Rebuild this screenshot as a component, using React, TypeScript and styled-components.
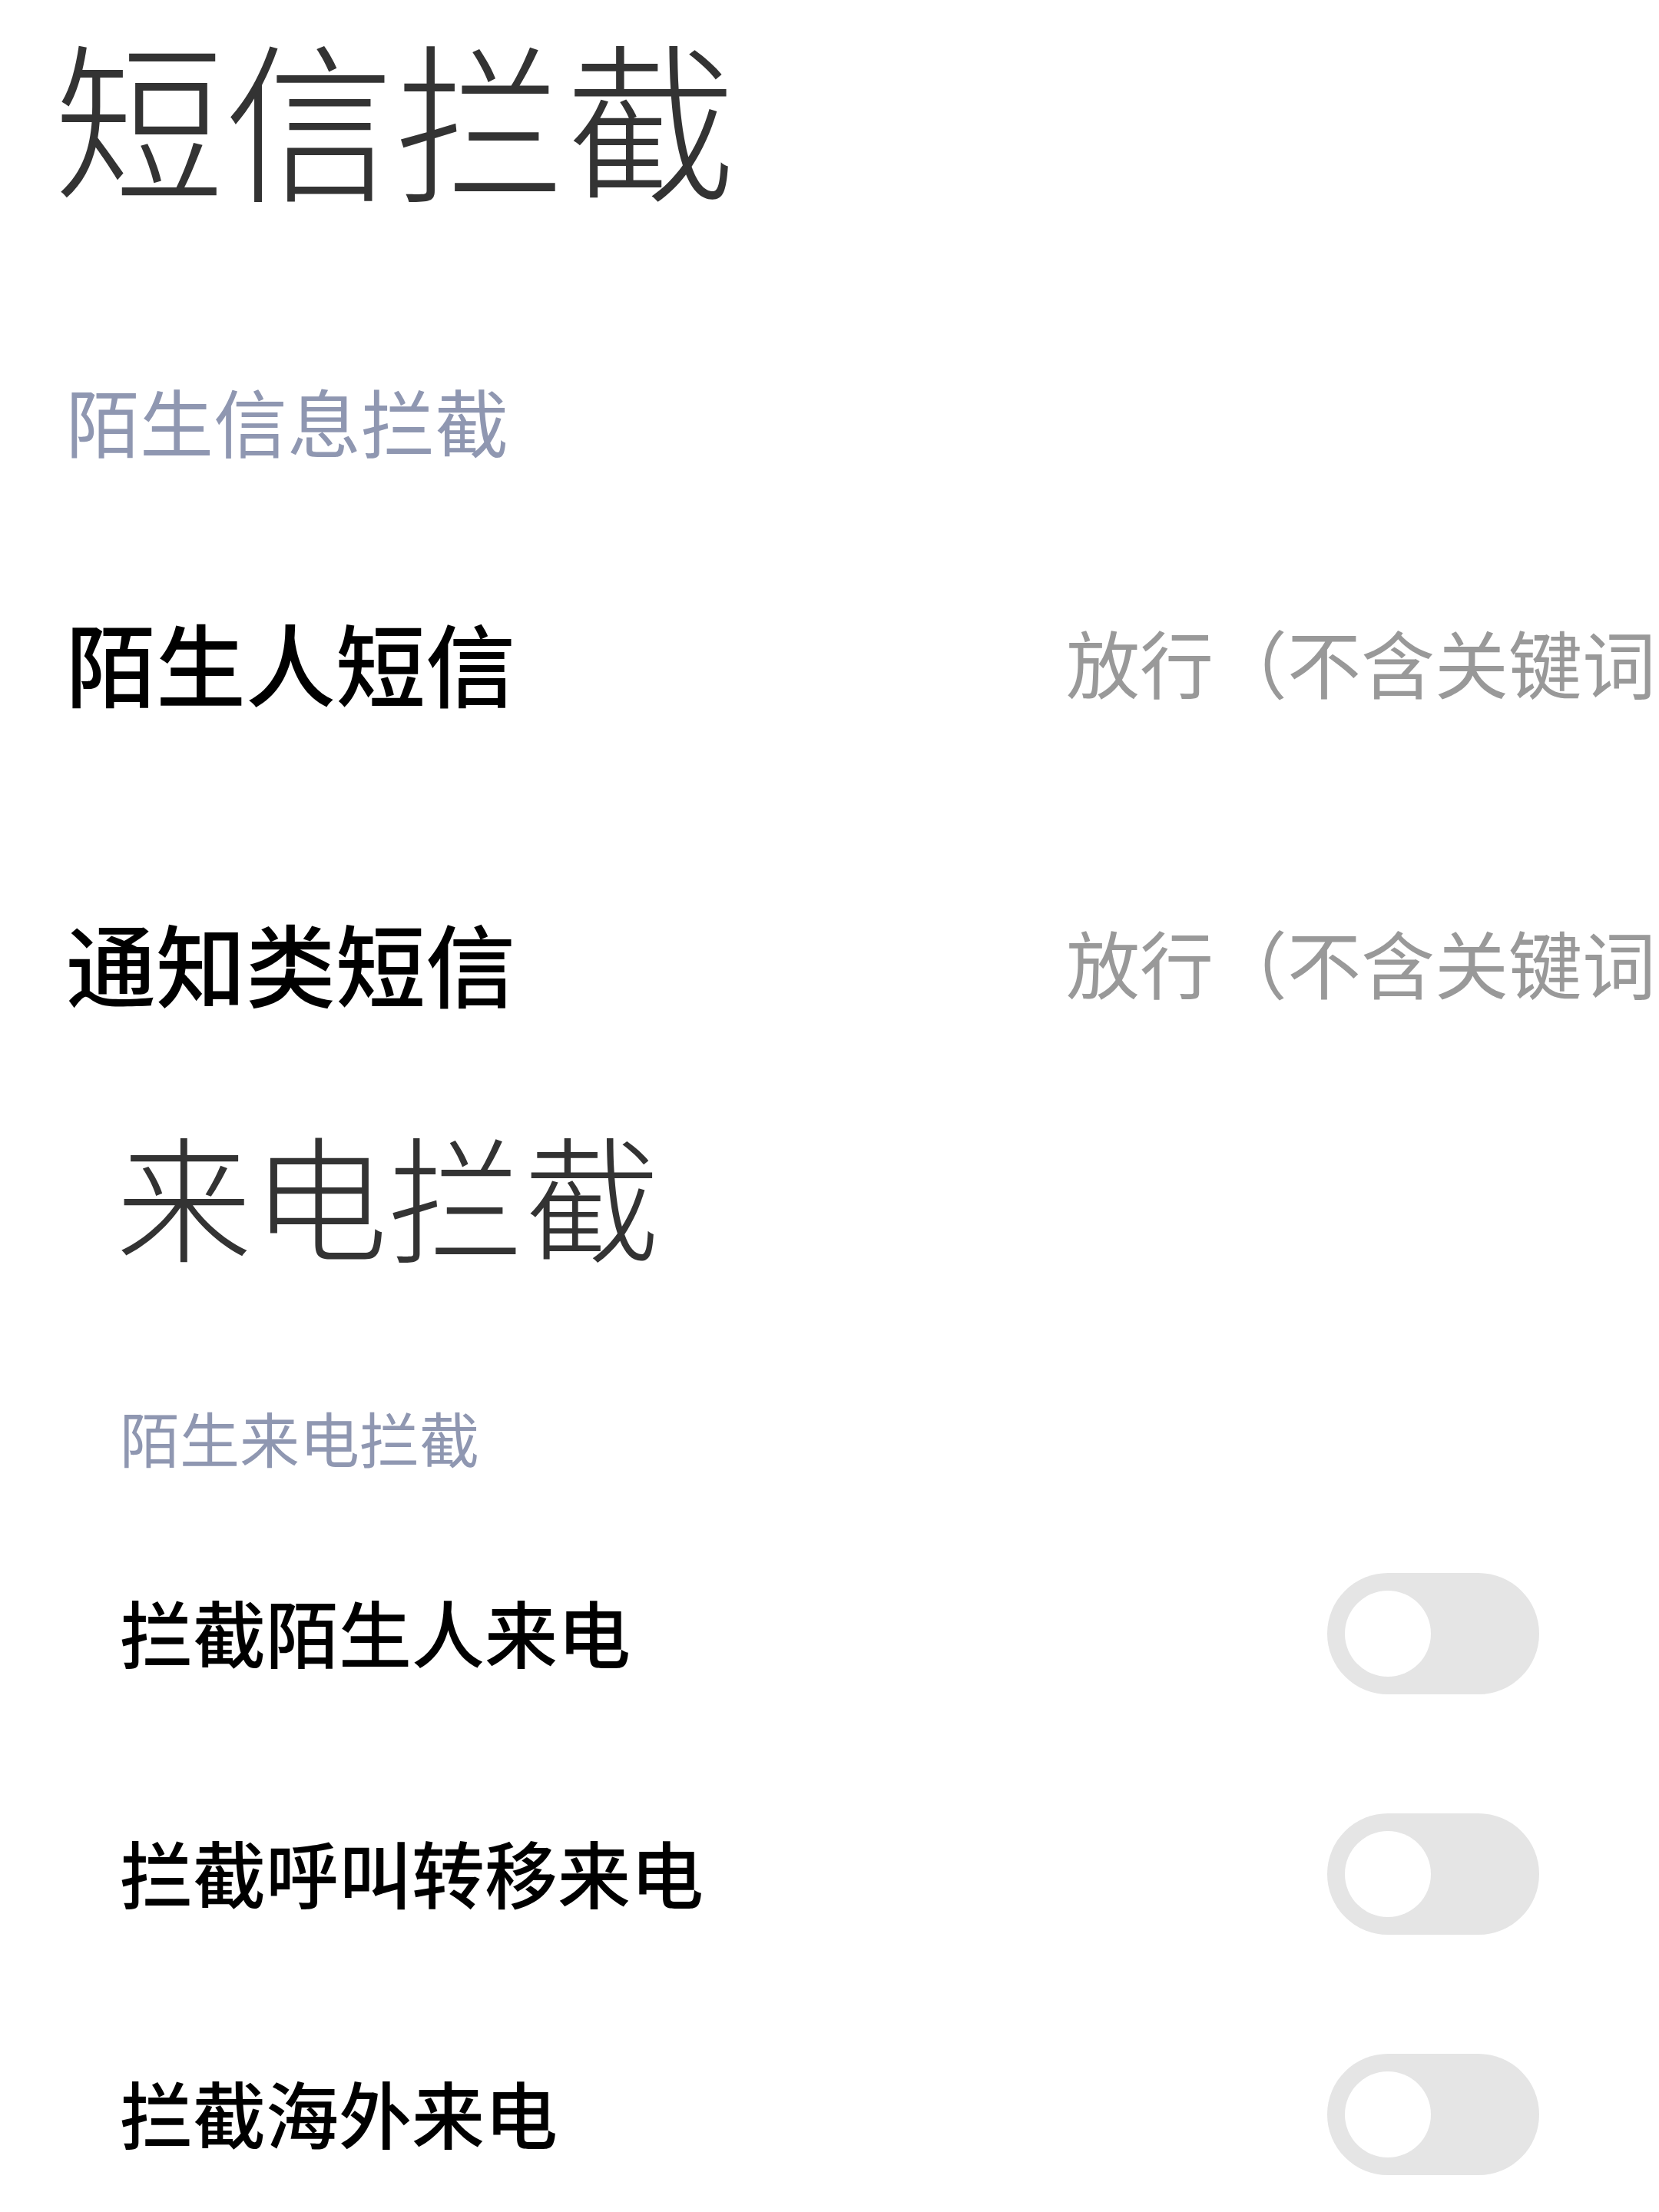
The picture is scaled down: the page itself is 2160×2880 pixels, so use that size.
import React, { FC } from 'react';
import styled, { createGlobalStyle } from 'styled-components';

const GlobalStyle = createGlobalStyle`
  html, body {
    margin: 0;
    padding: 0;
    background: #fff;
    overflow: hidden;
  }
  body {
    font-family: "Noto Sans CJK SC", "Noto Sans", sans-serif;
  }
`;

const Page = styled.div`
  width: 2160px;
  height: 2880px;
  overflow: hidden;
  background: #fff;
`;

const Section = styled.section<{ inset: number }>`
  display: flex;
  flex-direction: column;
  padding-left: ${({ inset }) => inset}px;
`;

const PageTitle = styled.h1<{ size: number; top: number; shift?: number }>`
  margin: ${({ top }) => top}px 0 0 ${({ shift }) => shift ?? 0}px;
  font-size: ${({ size }) => size}px;
  line-height: 1.2;
  font-weight: 300;
  color: #333;
  white-space: nowrap;
`;

const GroupLabel = styled.h2<{ size: number; top: number }>`
  margin: ${({ top }) => top}px 0 0;
  font-size: ${({ size }) => size}px;
  line-height: 1;
  font-weight: 400;
  color: #8f97b1;
  white-space: nowrap;
`;

const ValueRow = styled.div`
  display: grid;
  grid-template-columns: 1302px 1fr;
  align-items: center;
  height: 391px;
`;

const RowLabel = styled.span<{ size: number }>`
  font-size: ${({ size }) => size}px;
  line-height: 1.2;
  font-weight: 500;
  color: #000;
  white-space: nowrap;
`;

const RowValue = styled.span`
  font-size: 96px;
  line-height: 1.2;
  color: #999;
  white-space: nowrap;
  overflow: hidden;
`;

const SwitchRow = styled.div`
  display: flex;
  align-items: center;
  justify-content: space-between;
  height: 313px;
  padding-right: 156px;
`;

const Track = styled.div<{ on?: boolean }>`
  display: flex;
  align-items: center;
  box-sizing: border-box;
  width: 276px;
  height: 158px;
  margin-top: 6px;
  padding: 0 23px;
  border-radius: 79px;
  background: ${({ on }) => (on ? '#0d84ff' : '#e5e5e5')};
  justify-content: ${({ on }) => (on ? 'flex-end' : 'flex-start')};
`;

const Knob = styled.div`
  width: 112px;
  height: 112px;
  border-radius: 50%;
  background: #fff;
`;

const smsRows = [
  { label: '陌生人短信', value: '放行（不含关键词）' },
  { label: '通知类短信', value: '放行（不含关键词）' },
];

const callRows = ['拦截陌生人来电', '拦截呼叫转移来电', '拦截海外来电'];

const Toggle: FC<{ on?: boolean }> = ({ on }) => (
  <Track on={on} role="switch" aria-checked={!!on}>
    <Knob />
  </Track>
);

export default function App() {
  return (
    <Page>
      <GlobalStyle />
      <Section inset={86}>
        <PageTitle size={222} top={15} shift={-16}>
          短信拦截
        </PageTitle>
        <GroupLabel size={96} top={218}>
          陌生信息拦截
        </GroupLabel>
        <div style={{ height: 70 }} />
        {smsRows.map((row) => (
          <ValueRow key={row.label}>
            <RowLabel size={117}>{row.label}</RowLabel>
            <RowValue>{row.value}</RowValue>
          </ValueRow>
        ))}
      </Section>
      <Section inset={156}>
        <PageTitle size={177} top={0} shift={-5}>
          来电拦截
        </PageTitle>
        <GroupLabel size={78} top={172}>
          陌生来电拦截
        </GroupLabel>
        <div style={{ height: 58 }} />
        {callRows.map((label) => (
          <SwitchRow key={label}>
            <RowLabel size={95}>{label}</RowLabel>
            <Toggle />
          </SwitchRow>
        ))}
      </Section>
    </Page>
  );
}
